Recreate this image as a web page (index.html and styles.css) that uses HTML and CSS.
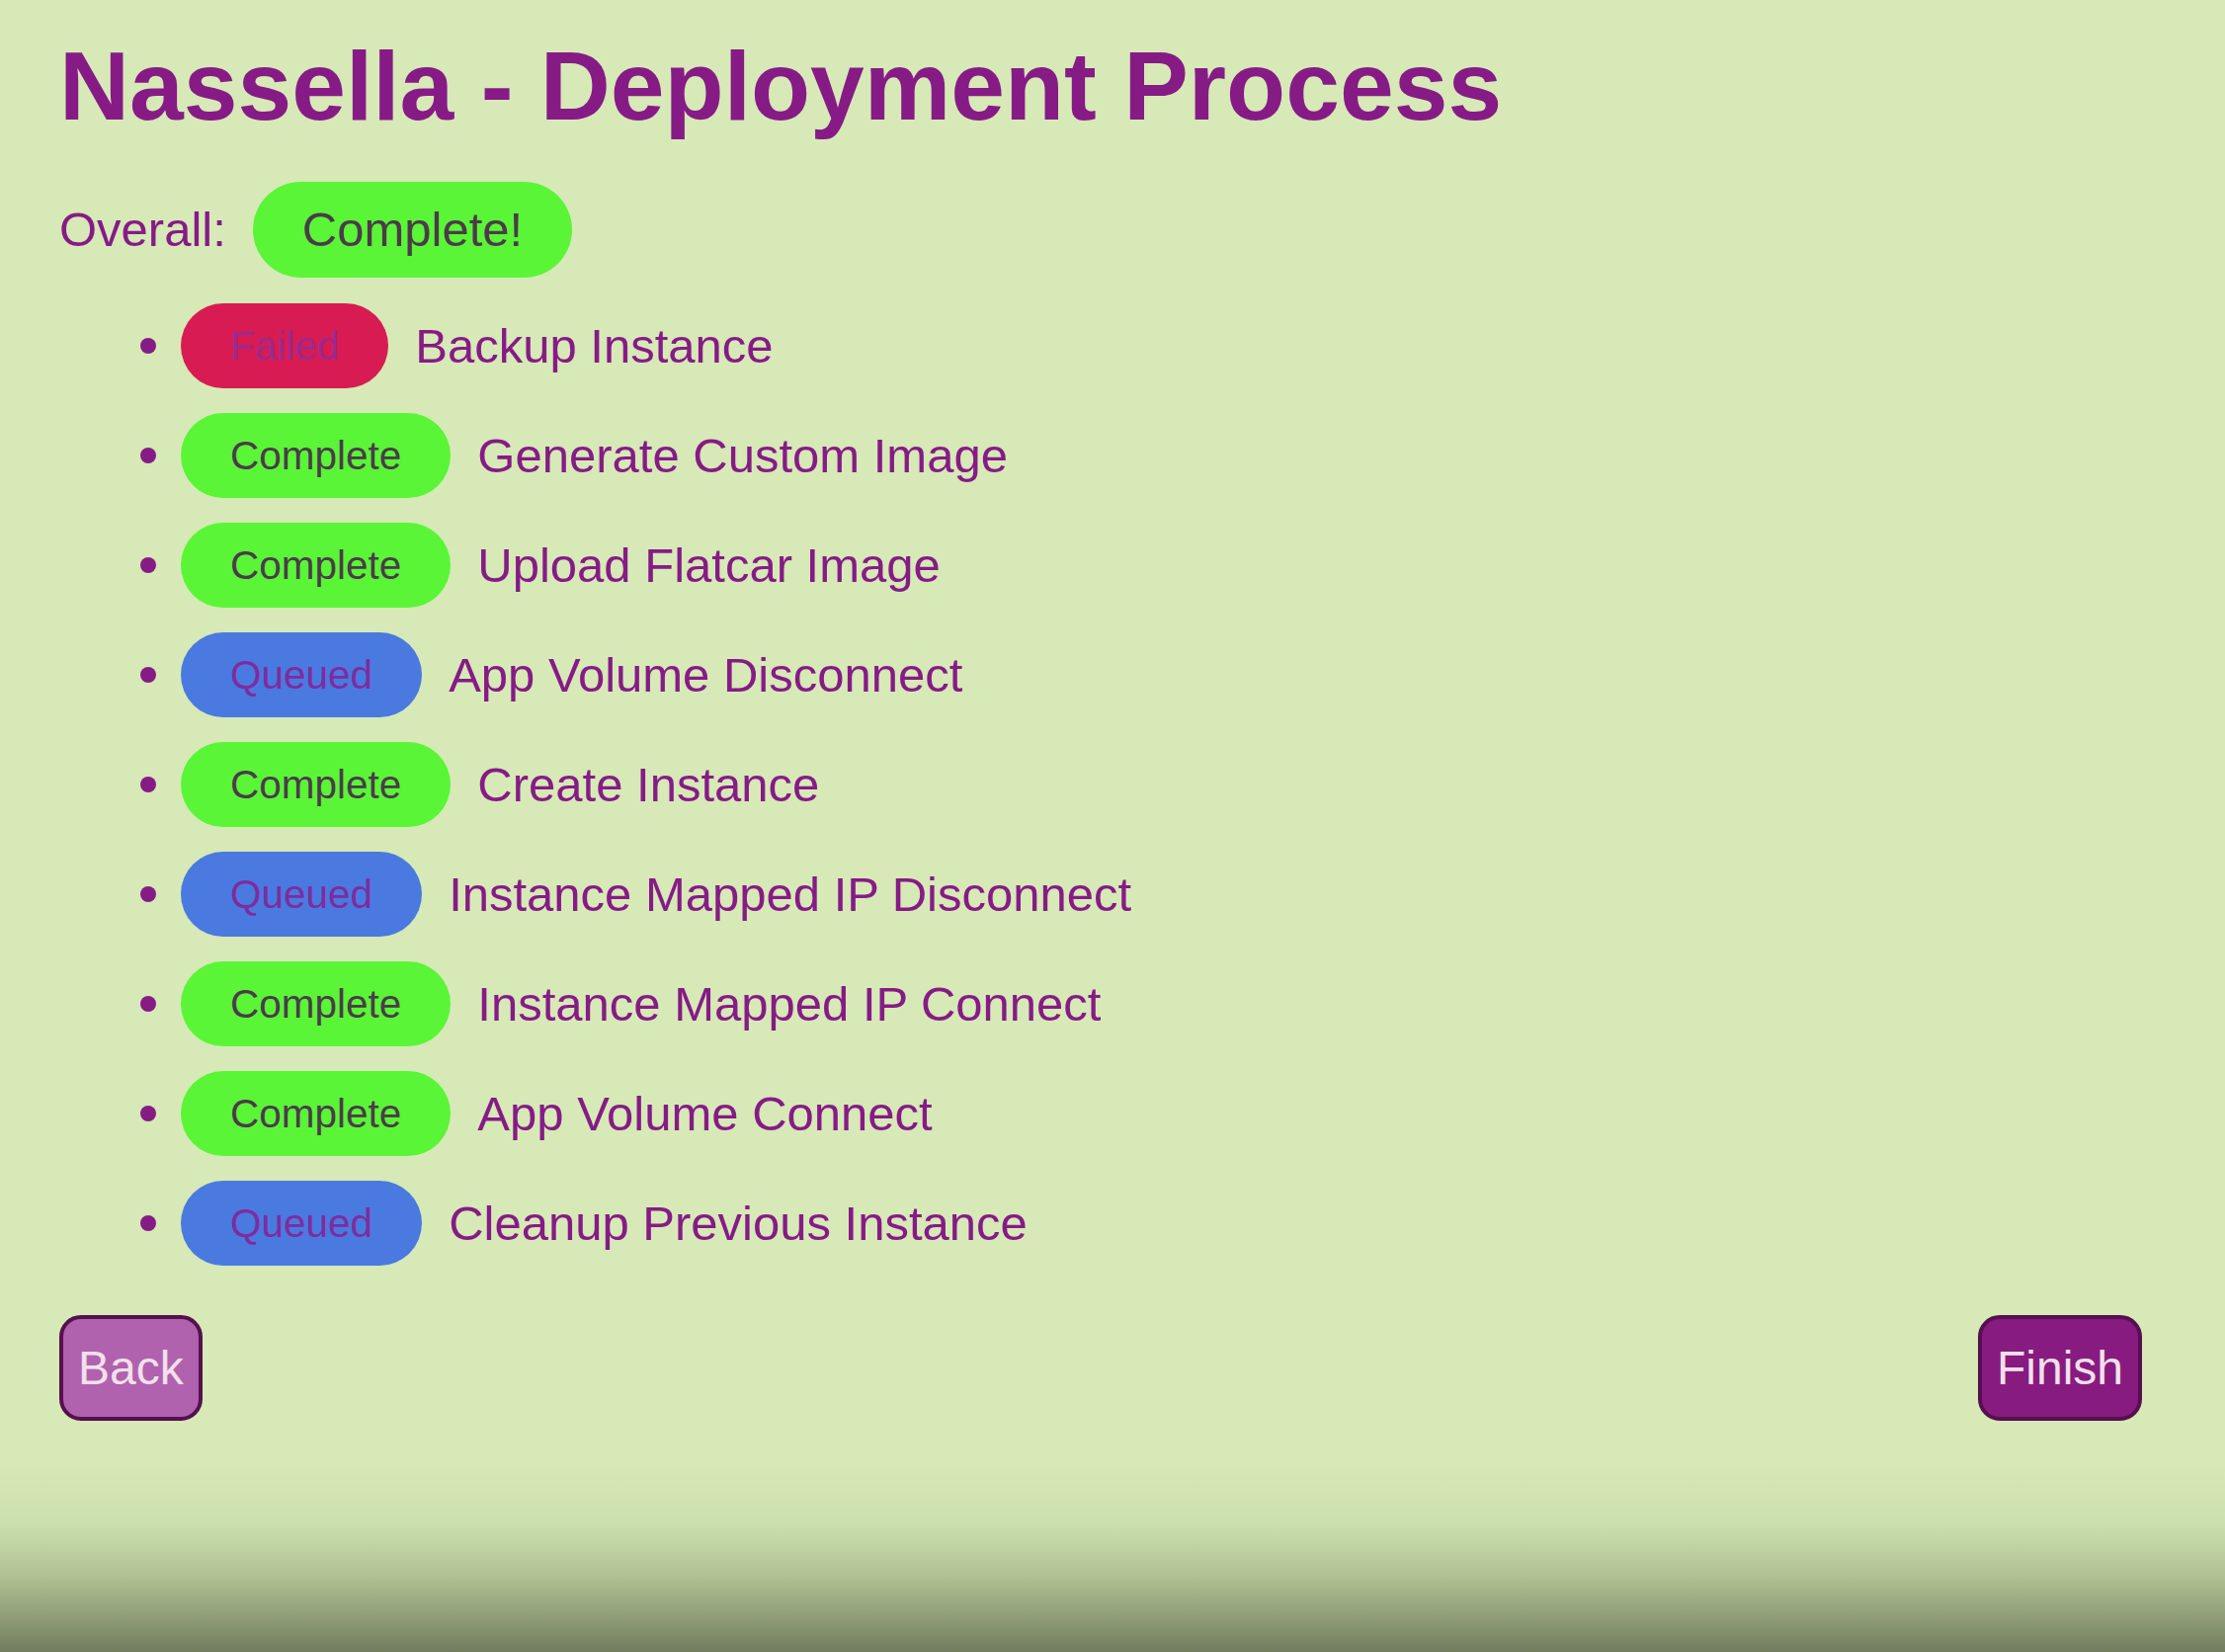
FILE: index.html
```html
<!DOCTYPE html>
<html lang="en">
<head>
<meta charset="utf-8">
<title>Nassella - Deployment Process</title>
<link rel="stylesheet" href="styles.css">
</head>
<body>
<main class="page">
  <h1 class="title">Nassella - Deployment Process</h1>
  <div class="overall">
    <span class="overall-label">Overall:</span>
    <span class="pill pill-big complete">Complete!</span>
  </div>
  <ul class="steps">
    <li class="step"><span class="pill failed">Failed</span><span class="step-name">Backup Instance</span></li>
    <li class="step"><span class="pill complete">Complete</span><span class="step-name">Generate Custom Image</span></li>
    <li class="step"><span class="pill complete">Complete</span><span class="step-name">Upload Flatcar Image</span></li>
    <li class="step"><span class="pill queued">Queued</span><span class="step-name">App Volume Disconnect</span></li>
    <li class="step"><span class="pill complete">Complete</span><span class="step-name">Create Instance</span></li>
    <li class="step"><span class="pill queued">Queued</span><span class="step-name">Instance Mapped IP Disconnect</span></li>
    <li class="step"><span class="pill complete">Complete</span><span class="step-name">Instance Mapped IP Connect</span></li>
    <li class="step"><span class="pill complete">Complete</span><span class="step-name">App Volume Connect</span></li>
    <li class="step"><span class="pill queued">Queued</span><span class="step-name">Cleanup Previous Instance</span></li>
  </ul>
  <div class="actions">
    <button class="btn btn-back" type="button">Back</button>
    <button class="btn btn-finish" type="button">Finish</button>
  </div>
</main>
</body>
</html>
```
FILE: styles.css
```css
html {
  height: 100%;
  background: linear-gradient(to bottom, #d6e9b7 0, #d6e9b7 1480px, #ccdfae 1540px, #b3c596 1590px, #95a37c 1630px, #717c5d 1672px);
}
body {
  margin: 0;
  min-height: 100%;
  font-family: "Liberation Sans", Arial, sans-serif;
  color: #861b86;
}
.page {
  padding: 31px 84px 0 60px;
  display: flex;
  flex-direction: column;
}
.title {
  margin: 0;
  font-size: 98.4px;
  font-weight: bold;
  line-height: 1.15;
  color: #861b86;
}
.overall {
  margin-top: 40px;
  display: flex;
  align-items: center;
  gap: 27px;
  font-size: 49px;
}
.overall-label {
  line-height: 1.15;
}
.pill {
  display: inline-block;
  border-radius: 999px;
  font-size: 40.5px;
  line-height: 46px;
  padding: 20px 50px;
  white-space: nowrap;
}
.pill-big {
  font-size: 49px;
  line-height: 55px;
  padding: 21px 50px;
}
.complete {
  background: #5af537;
  color: #4b3b49;
}
.failed {
  background: #d81b52;
  color: #9a2a8d;
}
.queued {
  background: #4a7ae0;
  color: #7e2c9f;
}
.steps {
  list-style: none;
  margin: 26px 0 0;
  padding: 0 0 0 82px;
  display: flex;
  flex-direction: column;
  gap: 25px;
}
.step {
  display: flex;
  align-items: center;
  gap: 27px;
  font-size: 49px;
}
.step::before {
  content: "";
  width: 16px;
  height: 16px;
  border-radius: 50%;
  background: #861b86;
  margin-right: -2px;
}
.step-name {
  line-height: 1.15;
}
.actions {
  margin-top: 50px;
  display: flex;
  justify-content: space-between;
  align-items: center;
}
.btn {
  font-family: "Liberation Sans", Arial, sans-serif;
  font-size: 48px;
  line-height: 55px;
  padding: 22px 15px;
  border: 4px solid #55104f;
  border-radius: 22px;
  color: #f3e0ea;
  cursor: pointer;
}
.btn-back {
  background: #b062ae;
}
.btn-finish {
  background: #871b80;
}
```
